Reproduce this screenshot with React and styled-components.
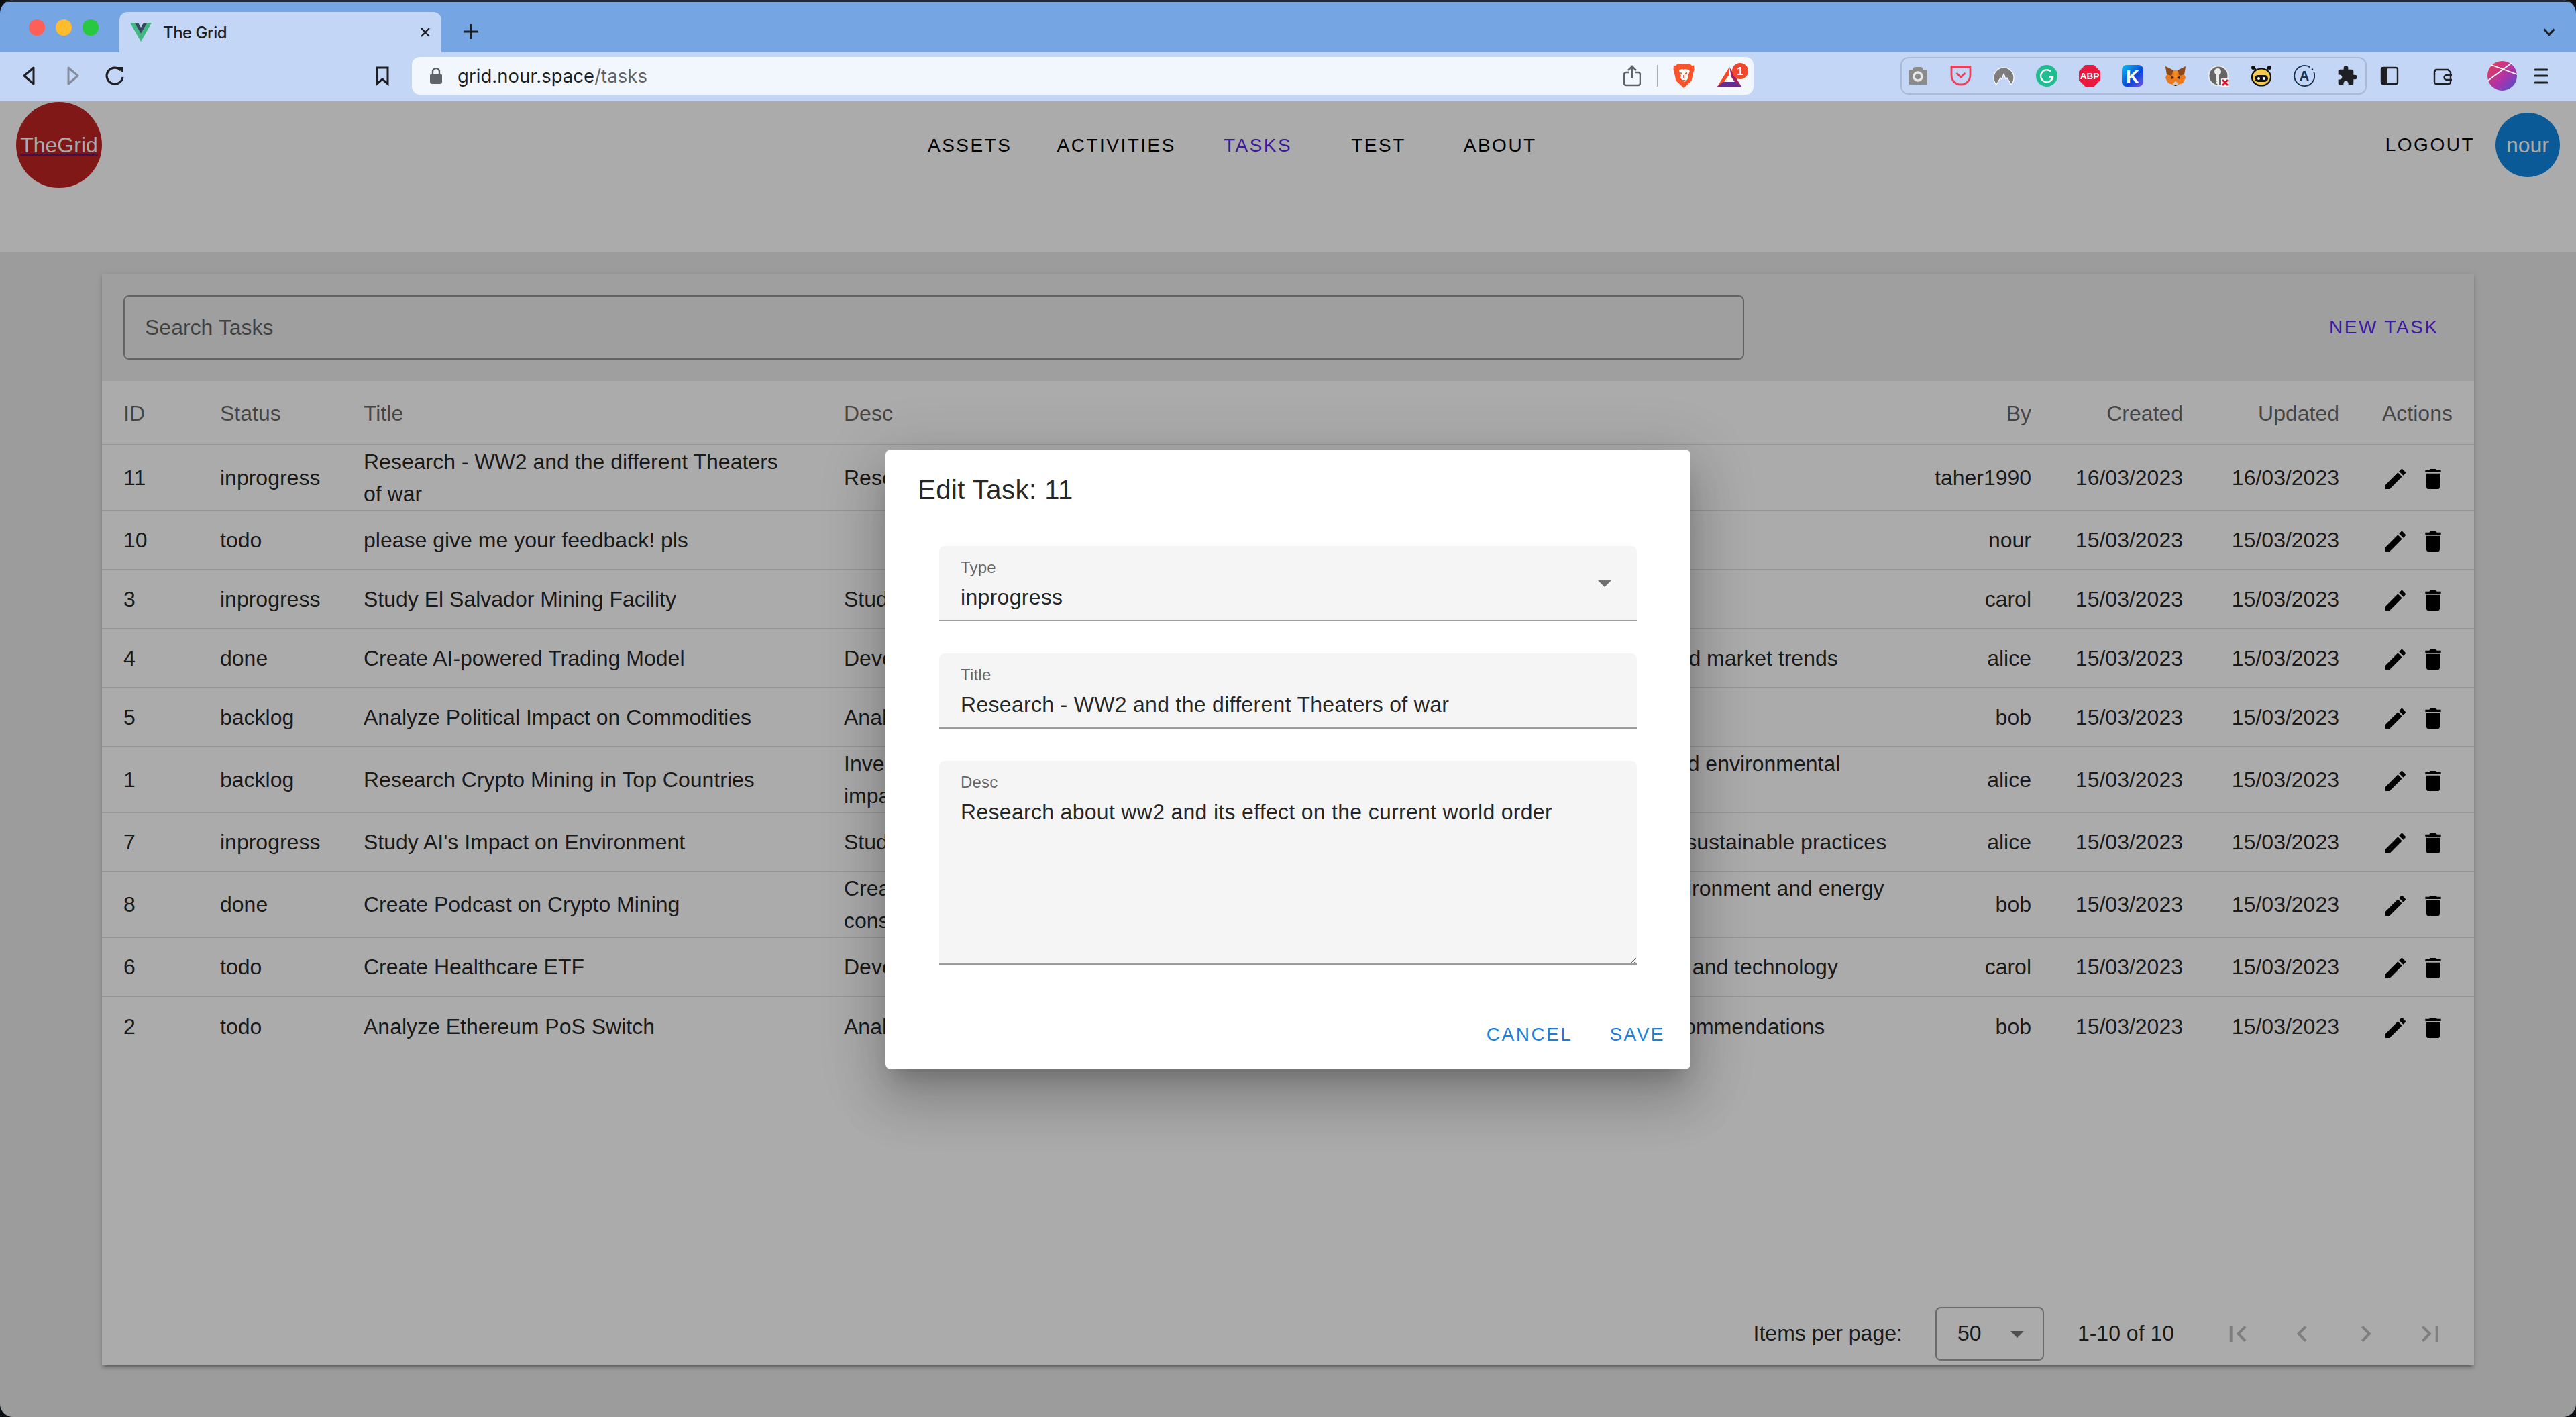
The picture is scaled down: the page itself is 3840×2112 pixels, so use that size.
import React from 'react';
import styled, { createGlobalStyle } from 'styled-components';

const Global = createGlobalStyle`
  html, body { margin: 0; padding: 0; background: #0b0f14; }
  * { box-sizing: border-box; }
  #root { width: 3840px; height: 2112px; overflow: hidden; }
`;

const SANS = `"Liberation Sans", Arial, sans-serif`;
const CHROME = `Inter, "Liberation Sans", sans-serif`;

/* ---------- window chrome ---------- */
const Window = styled.div`
  width: 3840px; height: 2112px; display: flex; flex-direction: column;
  border-radius: 20px; overflow: hidden; font-family: ${SANS};
`;
const TitleBar = styled.div`
  height: 78px; flex: none; display: flex; align-items: flex-end;
  background: #76a5e3; border-top: 3px solid #1d2a3b;
`;
const Lights = styled.div`
  display: flex; gap: 16px; margin-left: 43px; align-self: flex-start; margin-top: 26px;
`;
const Light = styled.span`
  width: 24px; height: 24px; border-radius: 50%; background: ${p => p.$c};
`;
const Tab = styled.div`
  width: 480px; height: 60px; margin-left: 31px; display: flex; align-items: center;
  background: #c3d6f5; border-radius: 12px 12px 0 0; padding: 0 16px;
`;
const TabTitle = styled.span`
  margin-left: 17px; font: 500 24px ${CHROME}; color: #1d1f22; letter-spacing: -0.5px;
`;
const TabClose = styled.svg`
  margin-left: auto; width: 16px; height: 16px;
`;
const NewTab = styled.svg`
  width: 24px; height: 24px; margin-left: 32px; margin-bottom: 19px;
`;
const TabsMenu = styled.svg`
  width: 18px; height: 12px; margin-left: auto; margin-right: 31px; margin-bottom: 24px;
`;
const Toolbar = styled.div`
  height: 74px; flex: none; display: flex; align-items: center; padding-bottom: 2px;
  background: #c3d6f5; border-bottom: 2px solid #a3afca;
`;
const ToolIcon = styled.svg`
  width: 32px; height: 32px; flex: none; margin-left: ${p => p.$ml || 0}px;
`;
const Address = styled.div`
  width: 2000px; height: 56px; margin-left: 28px; padding: 0 7px 0 26px; border-radius: 12px;
  background: #f2f7fd; display: flex; align-items: center;
`;
const Url = styled.span`
  margin-left: 22px; font: 400 27.4px ${CHROME}; color: #1d1f22; letter-spacing: 0.1px;
`;
const UrlPath = styled.span`
  color: #5f6368;
`;
const AddressEnd = styled.div`
  margin-left: auto; display: flex; align-items: center;
`;
const Sep = styled.span`
  width: 2px; height: 32px; background: #a9adb3; margin: 0 22px 0 24px;
`;
const Extensions = styled.div`
  height: 56px; margin-left: 219px; display: flex; align-items: center; gap: 32px;
  padding: 0 11px 0 8px; border: 2px solid #a9b9d6; border-radius: 12px;
`;

/* ---------- page ---------- */
const Viewport = styled.div`
  position: relative; flex: 1; min-height: 0; display: flex; flex-direction: column; background: #e9e9e9;
`;
const Header = styled.header`
  height: 224px; flex: none; background: #fff; padding: 0 24px;
`;
const HeaderRow = styled.div`
  height: 128px; display: flex; align-items: center;
`;
const Logo = styled.div`
  width: 128px; height: 128px; border-radius: 50%; background: #bf2424; flex: none;
  display: flex; align-items: center; justify-content: center;
`;
const LogoLink = styled.a`
  font-size: 32px; color: #fff; text-decoration: underline; text-decoration-color: #551a8b;
`;
const Nav = styled.nav`
  display: flex; margin-left: 1231px; padding-top: 2px;
`;
const TextButton = styled.span`
  font-size: 28px; letter-spacing: 2.5px; white-space: nowrap; line-height: 36px;
  color: ${p => p.$c || '#000'}; margin-left: ${p => p.$ml || 0}px;
`;
const HeaderEnd = styled.div`
  margin-left: auto; display: flex; align-items: center; gap: 31px;
`;
const Avatar = styled.div`
  width: 96px; height: 96px; border-radius: 50%; background: #0f87e2; color: #fff;
  display: flex; align-items: center; justify-content: center; font-size: 32px;
`;
const Main = styled.main`
  flex: 1; min-height: 0; padding: 32px 152px 77px;
`;
const Card = styled.section`
  height: 100%; display: flex; flex-direction: column; background: #fff;
  box-shadow: 0 6px 2px -4px rgba(0,0,0,.2), 0 4px 4px 0 rgba(0,0,0,.14), 0 2px 10px 0 rgba(0,0,0,.12);
`;
const CardTop = styled.div`
  height: 160px; flex: none; background: #eee; display: flex; align-items: center;
  padding: 0 52px 0 32px;
`;
const Search = styled.input`
  width: 2416px; height: 96px; border: 2px solid rgba(0,0,0,.38); border-radius: 8px; padding: 0 30px;
  background: transparent; font: 32px ${SANS}; outline: none;
  &::placeholder { color: rgba(0,0,0,.6); opacity: 1; }
`;
const TableEl = styled.table`
  width: 3536px; table-layout: fixed; border-collapse: separate; border-spacing: 0;
  font-size: 32px; line-height: 48px; color: rgba(0,0,0,.87);
`;
const Th = styled.th`
  height: 96px; padding: 2px ${p => p.$pr ?? 32}px 0 32px; font-weight: 400; color: rgba(0,0,0,.6);
  text-align: ${p => p.$right ? 'right' : 'left'}; border-bottom: 2px solid #e0e0e0;
`;
const Td = styled.td`
  height: 88px; padding: 0 ${p => p.$pr ?? 32}px 0 32px; text-align: ${p => p.$right ? 'right' : 'left'};
  border-bottom: 2px solid #e0e0e0;
  tr:last-child > & { border-bottom: 0; }
`;
const Actions = styled.div`
  display: flex; gap: 16px; margin-top: 4px;
`;
const ActionIcon = styled.svg`
  width: 40px; height: 40px; fill: #000; display: block;
`;
const Footer = styled.footer`
  margin-top: auto; height: 98px; flex: none; display: flex; align-items: center; justify-content: flex-end;
  font-size: 32px; color: rgba(0,0,0,.87); padding: 3px 18px 0 0;
`;
const PerPage = styled.div`
  width: 162px; height: 80px; margin: 0 50px 0 49px; padding: 0 32px 0 31px; border: 2px solid rgba(0,0,0,.38); border-radius: 8px;
  display: flex; align-items: center; justify-content: space-between;
`;
const PageRange = styled.span`
  margin-right: 47px;
`;
const Caret = styled.svg`
  width: 48px; height: 48px; fill: rgba(0,0,0,.54); flex: none; margin-right: -18px;
`;
const PageBtn = styled.svg`
  width: 95.5px; height: 48px; fill: rgba(0,0,0,.26); flex: none;
`;

/* ---------- dialog ---------- */
const Overlay = styled.div`
  position: absolute; inset: 0; background: rgba(0,0,0,.33); display: flex; align-items: center; justify-content: center;
`;
const Dialog = styled.div`
  width: 1200px; background: #fff; border-radius: 8px;
  box-shadow: 0 22px 30px -14px rgba(0,0,0,.2), 0 48px 76px 6px rgba(0,0,0,.14), 0 18px 92px 16px rgba(0,0,0,.12);
`;
const DialogTitle = styled.h2`
  margin: 0; height: 144px; padding: 28px 48px 0; font-size: 40px; font-weight: 400; line-height: 64px;
  letter-spacing: .5px; color: rgba(0,0,0,.87);
`;
const Form = styled.div`
  padding: 0 80px; display: flex; flex-direction: column; gap: 48px;
`;
const Field = styled.div`
  position: relative; height: ${p => p.$h || 112}px; background: #f5f5f5; border-radius: 8px 8px 0 0;
  border-bottom: 2px solid #9c9c9c; padding: 53px 32px 0; 
`;
const FieldLabel = styled.label`
  position: absolute; left: 32px; top: 18px; font-size: 24px; line-height: 28px; color: rgba(0,0,0,.6); letter-spacing: .2px;
`;
const FieldInput = styled.input`
  width: 100%; height: 46px; padding: 0; border: 0; background: transparent; outline: none;
  font: 32px/46px ${SANS}; letter-spacing: .3px; color: rgba(0,0,0,.87);
`;
const FieldArea = styled.textarea`
  position: absolute; left: 0; top: 0; width: 100%; height: 100%; padding: 53px 32px 0; border: 0; background: transparent; outline: none;
  font: 32px/46px ${SANS}; letter-spacing: .3px; color: rgba(0,0,0,.87); resize: vertical;
`;
const FieldCaret = styled.svg`
  position: absolute; right: 24px; top: 31px; width: 48px; height: 48px; fill: rgba(0,0,0,.54);
`;
const DialogActions = styled.div`
  height: 156px; padding: 0 38px 16px 0; display: flex; align-items: flex-end; justify-content: flex-end; 
`;
const ActionButton = styled.span`
  height: 72px; display: flex; align-items: center; font-size: 28px; letter-spacing: 2.5px; color: #1a7fdc; margin-left: ${p => p.$ml || 0}px;
`;

/* ---------- data ---------- */
const Pencil = "M20.71,7.04C21.1,6.65 21.1,6 20.71,5.63L18.37,3.29C18,2.9 17.35,2.9 16.96,3.29L15.12,5.12L18.87,8.87M3,17.25V21H6.75L17.81,9.93L14.06,6.18L3,17.25Z";
const Trash = "M19,4H15.5L14.5,3H9.5L8.5,4H5V6H19M6,19A2,2 0 0,0 8,21H16A2,2 0 0,0 18,19V7H6V19Z";
const rows = [
  [11, 'inprogress', 'Research - WW2 and the different Theaters of war', 'Research about ww2 and its effect on the current world order', 'taher1990', '16/03/2023', '16/03/2023'],
  [10, 'todo', 'please give me your feedback! pls', '', 'nour'],
  [3, 'inprogress', 'Study El Salvador Mining Facility', 'Study the El Salvador mining facility and report on its operations', 'carol'],
  [4, 'done', 'Create AI-powered Trading Model', 'Develop an AI-powered trading model with machine learning to analyze historical data and market trends', 'alice'],
  [5, 'backlog', 'Analyze Political Impact on Commodities', 'Analyze the political impact of recent events on global commodities', 'bob'],
  [1, 'backlog', 'Research Crypto Mining in Top Countries', 'Investigate and compare the crypto mining landscape in top countries, including legal, and environmental impact on local communities', 'alice'],
  [7, 'inprogress', "Study AI's Impact on Environment", 'Study the effects of AI on the environment, focusing on overall energy consumption, and sustainable practices', 'alice'],
  [8, 'done', 'Create Podcast on Crypto Mining', 'Create a podcast series discussing the latest crypto mining trends and their effect on environment and energy consumption', 'bob'],
  [6, 'todo', 'Create Healthcare ETF', 'Develop a novel exchange-traded fund focused on the growing intersection of healthcare and technology', 'carol'],
  [2, 'todo', 'Analyze Ethereum PoS Switch', 'Analyze the impact of the Ethereum PoS switch on the network, and provide detailed recommendations', 'bob'],
];
const cols = [144, 214, 716, 1626, 208, 226, 233, 169];

/* ---------- drawings ---------- */
const VueIcon = () => (
  <svg width="32" height="28" viewBox="0 0 32 28">
    <path d="M0 0h6.5L16 16 25.5 0H32L16 28z" fill="#41b883" />
    <path d="M6.5 0H12l4 7 4-7h5.500L16 16z" fill="#35495e" />
  </svg>
);
const Fox = () => (
  <ToolIcon viewBox="0 0 32 32">
    <path d="M1 2l12 6h6l12-6-2 12 2 5-4 8-7 2-2 2h-4l-2-2-7-2-4-8 2-5z" fill="#e8791f" />
    <path d="M1 2l12 6-3 8-7-2zM31 2L19 8l3 8 7-2z" fill="#8a4a1f" />
    <path d="M10 16l4 3-4 2zM22 16l-4 3 4 2z" fill="#3d2a1c" />
    <path d="M12 27l4-3 4 3-1 3h-6z" fill="#d8c6b5" />
    <path d="M14 29h4l-1 2h-2z" fill="#2b2118" />
    <path d="M13 8h6l-1 11h-4z" fill="#f6891f" />
  </ToolIcon>
);
const BraveLion = () => (
  <svg width="32" height="38" viewBox="0 0 32 38">
    <path d="M7 1h18l3 3 3-.5.500 6-1.500 6-2.500 11L16 37 4.500 26.500 2 15.500.5 9.500 1 3.500 4 4z" fill="#fb542b" />
    <path d="M9 10l5-1 2 1 2-1 5 1 2 2-3 7 1 3-4 5-2 1-2-1-4-5 1-3-3-7z" fill="#fff" />
    <path d="M11 14l3 1v2l-3-1zM21 14l-3 1v2l3-1zM15 18h2v5h-2zM13 25h6l-3 3z" fill="#fb542b" />
  </svg>
);
const Bat = () => (
  <svg width="47" height="36" viewBox="0 0 47 36" style={{ marginLeft: 34, overflow: 'visible' }}>
    <path d="M18 5L0 34h18z" fill="#ff4724" />
    <path d="M18 5l18 29H24z" fill="#9e1f63" />
    <path d="M0 34l9-7h18l9 7z" fill="#662d91" />
    <path d="M18 16l8 11H10z" fill="#fff" />
    <circle cx="34" cy="11" r="12" fill="#f1472d" />
    <text x="34" y="17" textAnchor="middle" fontSize="17" fontWeight="700" fontFamily="Liberation Sans" fill="#fff">1</text>
  </svg>
);

export default function App() {
  return (
    <Window>
      <Global />
      <TitleBar>
        <Lights>
          <Light $c="#ff5f57" /><Light $c="#febc2e" /><Light $c="#28c840" />
        </Lights>
        <Tab>
          <VueIcon />
          <TabTitle>The Grid</TabTitle>
          <TabClose viewBox="0 0 16 16"><path d="M2 2l12 12M14 2L2 14" stroke="#1d1f22" strokeWidth="2.400" /></TabClose>
        </Tab>
        <NewTab viewBox="0 0 24 24"><path d="M12 1v22M1 12h22" stroke="#1d1f22" strokeWidth="3" /></NewTab>
        <TabsMenu viewBox="0 0 18 12"><path d="M1.500 1.500L9 9.500l7.500-8" fill="none" stroke="#1d1f22" strokeWidth="3" /></TabsMenu>
      </TitleBar>
      <Toolbar>
        <ToolIcon $ml={29} viewBox="0 0 32 32"><path d="M21 4L7 16l14 12z" fill="none" stroke="#1d1f22" strokeWidth="3" strokeLinejoin="round" /></ToolIcon>
        <ToolIcon $ml={31} viewBox="0 0 32 32"><path d="M10 4l14 12-14 12z" fill="none" stroke="#858c9c" strokeWidth="3" strokeLinejoin="round" /></ToolIcon>
        <ToolIcon $ml={32} viewBox="0 0 32 32"><path d="M24 8a12 12 0 1 0 3 10" fill="none" stroke="#1d1f22" strokeWidth="3.200" /><path d="M18 3h10v9z" fill="#1d1f22" /></ToolIcon>
        <ToolIcon $ml={366} viewBox="0 0 32 32"><path d="M8 4h16v24l-8-7-8 7z" fill="none" stroke="#1d1f22" strokeWidth="3" /></ToolIcon>
        <Address>
          <svg width="20" height="24" viewBox="0 0 20 24"><path d="M5 10V6a5 5 0 0 1 10 0v4" fill="none" stroke="#5f6368" strokeWidth="2.400" /><rect x="1" y="9" width="18" height="15" rx="3" fill="#5f6368" /></svg>
          <Url>grid.nour.space<UrlPath>/tasks</UrlPath></Url>
          <AddressEnd>
            <svg width="26" height="32" viewBox="0 0 26 32"><path d="M8 11H4a3 3 0 0 0-3 3v13a3 3 0 0 0 3 3h18a3 3 0 0 0 3-3V14a3 3 0 0 0-3-3h-4" fill="none" stroke="#5f6368" strokeWidth="2.600" /><path d="M13 20V3M7 8l6-6 6 6" fill="none" stroke="#5f6368" strokeWidth="2.600" /></svg>
            <Sep />
            <BraveLion />
            <Bat />
          </AddressEnd>
        </Address>
        <Extensions>
          <ToolIcon viewBox="0 0 32 32"><path d="M2 9a2 2 0 0 1 2-2h5V6a3 3 0 0 1 3-3h8a3 3 0 0 1 3 3v1h5a2 2 0 0 1 2 2v18a2 2 0 0 1-2 2H4a2 2 0 0 1-2-2z" fill="#8b8b8b" /><circle cx="16" cy="17" r="6" fill="none" stroke="#e8e8e8" strokeWidth="3.500" /></ToolIcon>
          <ToolIcon viewBox="0 0 32 32"><path d="M2 2.500h28V15a14 14 0 0 1-28 0z" fill="none" stroke="#ef3f56" strokeWidth="2.800" strokeLinejoin="round" /><path d="M9.500 12l6.500 6 6.500-6" fill="none" stroke="#ef3f56" strokeWidth="3" /></ToolIcon>
          <ToolIcon viewBox="0 0 32 32"><path d="M5 29A15 15 0 1 1 27 29L21 19 19 21 16 13 13 21 11 19z" fill="#7d7d7d" stroke="#fff" strokeWidth="1.200" strokeLinejoin="round" /></ToolIcon>
          <ToolIcon viewBox="0 0 32 32"><circle cx="16" cy="16" r="16" fill="#1fbd8f" /><path d="M22 9.500a9 9 0 1 0 3 8h-6" fill="none" stroke="#fff" strokeWidth="2.400" /></ToolIcon>
          <ToolIcon viewBox="0 0 32 32"><path d="M9.500 0h13L32 9.500v13L22.500 32h-13L0 22.500v-13z" fill="#e8183f" /><text x="16" y="21" textAnchor="middle" fontSize="13.500" fontWeight="700" fontFamily="Liberation Sans" fill="#fff">ABP</text></ToolIcon>
          <ToolIcon viewBox="0 0 32 32">
            <defs><linearGradient id="kg" x1="0" y1="0" x2="1" y2="1"><stop offset="0" stopColor="#07c0f2" /><stop offset=".6" stopColor="#0a44d8" /><stop offset="1" stopColor="#7a5ae6" /></linearGradient></defs>
            <rect width="32" height="32" rx="7" fill="url(#kg)" /><text x="16" y="27" textAnchor="middle" fontSize="28" fontWeight="700" fontFamily="Liberation Sans" fill="#fff">K</text>
          </ToolIcon>
          <Fox />
          <ToolIcon viewBox="0 0 32 32">
            <circle cx="16" cy="16" r="14.500" fill="#666" stroke="#e8e8e8" strokeWidth="2" /><circle cx="15" cy="10" r="5" fill="#eee" /><path d="M13 12h4v17h-2l-2-2v-2l1-1-1-1z" fill="#eee" /><rect x="20" y="20" width="12" height="12" fill="#f5f5f5" /><path d="M22 22l8 8M30 22l-8 8" stroke="#e8102c" strokeWidth="2.800" />
          </ToolIcon>
          <ToolIcon viewBox="0 0 32 32">
            <path d="M8 7l-3-3M24 7l3-3" stroke="#111" strokeWidth="2" /><circle cx="4" cy="4" r="3" fill="#111" /><circle cx="28" cy="4" r="3" fill="#111" />
            <ellipse cx="16" cy="18" rx="14" ry="12.500" fill="#f7c948" stroke="#111" strokeWidth="2.200" /><rect x="6" y="15" width="20" height="10" rx="5" fill="#111" /><circle cx="12" cy="20" r="2" fill="#fff" /><circle cx="20" cy="20" r="2" fill="#fff" />
          </ToolIcon>
          <ToolIcon viewBox="0 0 32 32">
            <path d="M24.500 3.500A15 15 0 1 0 30 10" fill="none" stroke="#14324f" strokeWidth="1.800" /><circle cx="28" cy="6.500" r="1.300" fill="#14324f" /><text x="16" y="23" textAnchor="middle" fontSize="20" fontWeight="700" fontFamily="Liberation Sans" fill="#14324f">A</text>
          </ToolIcon>
          <ToolIcon viewBox="0 0 24 24"><path fill="#1d1f22" d="M20.5,11H19V7C19,5.89 18.1,5 17,5H13V3.500A2.500,2.500 0 0,0 10.500,1A2.500,2.500 0 0,0 8,3.500V5H4A2,2 0 0,0 2,7V10.800H3.500C5,10.800 6.200,12 6.200,13.500C6.200,15 5,16.200 3.500,16.200H2V20A2,2 0 0,0 4,22H7.800V20.500C7.800,19 9,17.800 10.500,17.800C12,17.800 13.200,19 13.200,20.500V22H17A2,2 0 0,0 19,20V16H20.500A2.500,2.500 0 0,0 23,13.500A2.500,2.500 0 0,0 20.500,11Z" /></ToolIcon>
        </Extensions>
        <ToolIcon $ml={18} viewBox="0 0 32 32"><rect x="4" y="4" width="24" height="24" rx="2.500" fill="none" stroke="#1d1f22" strokeWidth="2.400" /><rect x="4" y="4" width="9" height="24" fill="#1d1f22" /></ToolIcon>
        <ToolIcon $ml={48} viewBox="0 0 32 32"><path d="M3 10a3 3 0 0 1 3-3h17l4 4v14a3 3 0 0 1-3 3H6a3 3 0 0 1-3-3zM3 10l3-3" fill="none" stroke="#1d1f22" strokeWidth="2.400" /><path d="M29 15h-8a3 3 0 0 0 0 7h8" fill="none" stroke="#1d1f22" strokeWidth="2.400" /></ToolIcon>
        <svg width="44" height="44" viewBox="0 0 44 44" style={{ marginLeft: 50 }}>
          <defs><linearGradient id="ag" x1="0" y1="0" x2="1" y2="1"><stop offset="0" stopColor="#ef3f4a" /><stop offset=".55" stopColor="#b032a8" /><stop offset="1" stopColor="#3d55cc" /></linearGradient></defs>
          <circle cx="22" cy="22" r="22" fill="url(#ag)" />
          <path d="M6 6l38 14M36 3L1 29" stroke="#fff" strokeWidth="1.800" />
        </svg>
        <ToolIcon $ml={20} viewBox="0 0 32 32"><path d="M7 7h18M7 16h18M7 26h18" stroke="#1d1f22" strokeWidth="3" strokeLinecap="round" /></ToolIcon>
      </Toolbar>
      <Viewport>
        <Header>
          <HeaderRow>
            <Logo><LogoLink>TheGrid</LogoLink></Logo>
            <Nav>
              <TextButton>ASSETS</TextButton>
              <TextButton $ml={67}>ACTIVITIES</TextButton>
              <TextButton $ml={71} $c="#5a27ee">TASKS</TextButton>
              <TextButton $ml={88}>TEST</TextButton>
              <TextButton $ml={86}>ABOUT</TextButton>
            </Nav>
            <HeaderEnd>
              <TextButton>LOGOUT</TextButton>
              <Avatar>nour</Avatar>
            </HeaderEnd>
          </HeaderRow>
        </Header>
        <Main>
          <Card>
            <CardTop>
              <Search placeholder="Search Tasks" readOnly />
              <TextButton $ml={872} $c="#5a27ee">NEW TASK</TextButton>
            </CardTop>
            <TableEl>
              <colgroup>{cols.map((w, i) => <col key={i} style={{ width: w }} />)}</colgroup>
              <thead>
                <tr>
                  <Th>ID</Th><Th>Status</Th><Th>Title</Th><Th>Desc</Th>
                  <Th $right>By</Th><Th $right>Created</Th><Th $right>Updated</Th><Th>Actions</Th>
                </tr>
              </thead>
              <tbody>
                {rows.map(r => (
                  <tr key={r[0]}>
                    <Td>{r[0]}</Td><Td>{r[1]}</Td><Td>{r[2]}</Td><Td>{r[3]}</Td>
                    <Td $right>{r[4]}</Td>
                    <Td $right>{r[5] || '15/03/2023'}</Td>
                    <Td $right>{r[6] || '15/03/2023'}</Td>
                    <Td $pr={0}>
                      <Actions>
                        <ActionIcon viewBox="0 0 24 24"><path d={Pencil} /></ActionIcon>
                        <ActionIcon viewBox="0 0 24 24"><path d={Trash} /></ActionIcon>
                      </Actions>
                    </Td>
                  </tr>
                ))}
              </tbody>
            </TableEl>
            <Footer>
              <span>Items per page:</span>
              <PerPage>
                <span>50</span>
                <Caret viewBox="0 0 24 24"><path d="M7,10L12,15L17,10H7Z" /></Caret>
              </PerPage>
              <PageRange>1-10 of 10</PageRange>
              <PageBtn viewBox="0 0 24 24"><path d="M18.41,16.59L13.82,12L18.41,7.41L17,6L11,12L17,18L18.41,16.59M6,6H8V18H6V6Z" /></PageBtn>
              <PageBtn viewBox="0 0 24 24"><path d="M15.41,16.58L10.83,12L15.41,7.41L14,6L8,12L14,18L15.41,16.58Z" /></PageBtn>
              <PageBtn viewBox="0 0 24 24"><path d="M8.59,16.58L13.17,12L8.59,7.41L10,6L16,12L10,18L8.59,16.58Z" /></PageBtn>
              <PageBtn viewBox="0 0 24 24"><path d="M5.59,7.41L10.18,12L5.59,16.59L7,18L13,12L7,6L5.59,7.41M16,6H18V18H16V6Z" /></PageBtn>
            </Footer>
          </Card>
        </Main>
        <Overlay>
          <Dialog>
            <DialogTitle>Edit Task: 11</DialogTitle>
            <Form>
              <Field>
                <FieldLabel>Type</FieldLabel>
                <FieldInput readOnly value="inprogress" />
                <FieldCaret viewBox="0 0 24 24"><path d="M7,10L12,15L17,10H7Z" /></FieldCaret>
              </Field>
              <Field>
                <FieldLabel>Title</FieldLabel>
                <FieldInput readOnly value="Research - WW2 and the different Theaters of war" />
              </Field>
              <Field $h={304}>
                <FieldArea readOnly value="Research about ww2 and its effect on the current world order" />
                <FieldLabel>Desc</FieldLabel>
              </Field>
            </Form>
            <DialogActions>
              <ActionButton>CANCEL</ActionButton>
              <ActionButton $ml={55}>SAVE</ActionButton>
            </DialogActions>
          </Dialog>
        </Overlay>
      </Viewport>
    </Window>
  );
}
